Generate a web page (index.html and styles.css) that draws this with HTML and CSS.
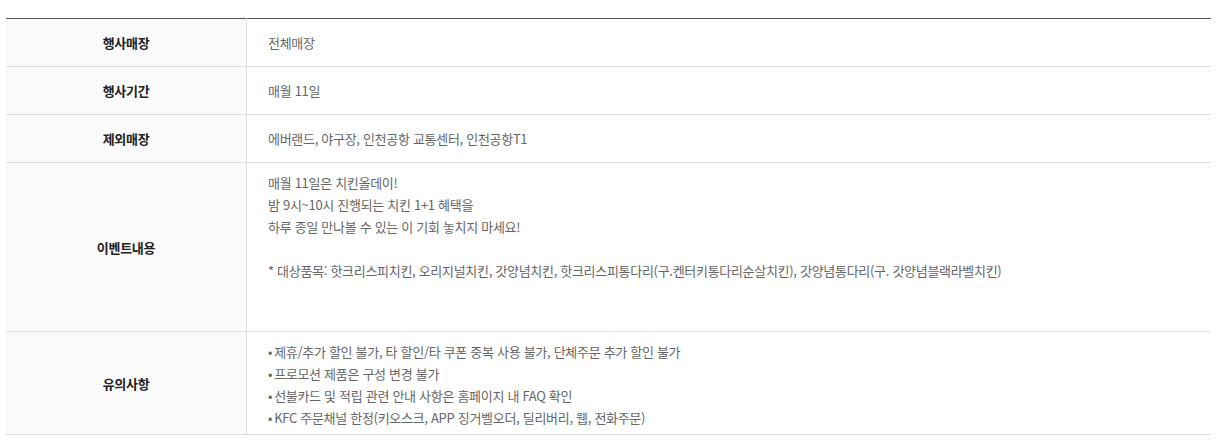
FILE: index.html
```html
<!DOCTYPE html>
<html lang="ko">
<head>
<meta charset="utf-8">
<link rel="stylesheet" href="styles.css">
</head>
<body>
<div class="wrap">
  <table class="info">
    <tbody>
      <tr class="r48">
        <th>행사매장</th>
        <td>전체매장</td>
      </tr>
      <tr class="r48">
        <th>행사기간</th>
        <td>매월 11일</td>
      </tr>
      <tr class="r48">
        <th>제외매장</th>
        <td>에버랜드, 야구장, 인천공항 교통센터, 인천공항T1</td>
      </tr>
      <tr class="event">
        <th>이벤트내용</th>
        <td>매월 11일은 치킨올데이!<br>밤 9시~10시 진행되는 치킨 1+1 혜택을<br>하루 종일 만나볼 수 있는 이 기회 놓치지 마세요!<br><br>* 대상품목: 핫크리스피치킨, 오리지널치킨, 갓양념치킨, 핫크리스피통다리(구.켄터키통다리순살치킨), 갓양념통다리(구. 갓양념블랙라벨치킨)</td>
      </tr>
      <tr class="notes">
        <th>유의사항</th>
        <td>
          <ul>
            <li>제휴/추가 할인 불가, 타 할인/타 쿠폰 중복 사용 불가, 단체주문 추가 할인 불가</li>
            <li>프로모션 제품은 구성 변경 불가</li>
            <li>선불카드 및 적립 관련 안내 사항은 홈페이지 내 FAQ 확인</li>
            <li>KFC 주문채널 한정(키오스크, APP 징거벨오더, 딜리버리, 웹, 전화주문)</li>
          </ul>
        </td>
      </tr>
    </tbody>
  </table>
</div>
</body>
</html>
```

FILE: styles.css
```css
html, body {
  margin: 0;
  padding: 0;
  background: #fff;
}
body {
  font-family: "Noto Sans CJK KR", "Noto Sans", sans-serif;
  font-size: 13px;
  letter-spacing: -0.3px;
  color: #666;
}
.wrap {
  padding: 18px 9px 0 6px;
}
.info {
  width: 100%;
  border-collapse: collapse;
  border-top: 1px solid #555;
  table-layout: fixed;
}
.info th {
  width: 240px;
  background: #fafafa;
  color: #222;
  font-weight: 700;
  font-size: 13px;
  text-align: center;
  border-right: 1px solid #ddd;
  border-bottom: 1px solid #ddd;
  padding: 0;
}
.info td {
  border-bottom: 1px solid #ddd;
  padding: 0 0 0 21px;
  vertical-align: middle;
  line-height: 22px;
}
.r48 th, .r48 td {
  height: 47px;
}
.event td {
  vertical-align: top;
  padding-top: 9px;
  height: 159px;
}
.notes td {
  padding-top: 9px;
  padding-bottom: 5px;
  line-height: 22px;
}
.notes ul {
  margin: 0;
  padding: 0;
  list-style: none;
}
.notes li::before {
  content: "•";
  margin-right: 2px;
}
```
